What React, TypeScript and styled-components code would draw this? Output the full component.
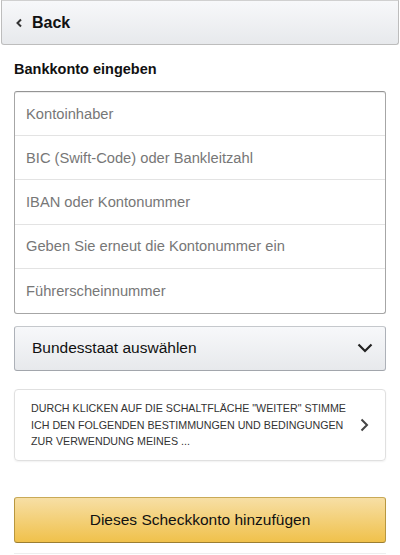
import React from "react";
import styled, { createGlobalStyle } from "styled-components";

const Global = createGlobalStyle`
  html, body { margin: 0; padding: 0; background: #fff; }
  body { font-family: "Liberation Sans", Arial, sans-serif; color: #111; }
  * { box-sizing: border-box; }
`;

const Page = styled.div`
  width: 400px;
  min-height: 555px;
  display: flex;
  flex-direction: column;
  & > * { flex-shrink: 0; }
`;

const Header = styled.div`
  height: 45px;
  margin: 0 1px;
  border: 1px solid #bdbdbd;
  border-top-color: #d0d0d0;
  border-radius: 0 0 3px 3px;
  background: linear-gradient(#f7f8fa, #e7e9ec);
  display: flex;
  align-items: center;
  padding-left: 13px;
  gap: 9px;
  font-size: 16px;
  font-weight: bold;
  color: #111;
`;

const Content = styled.div`
  padding: 0 14px;
  display: flex;
  flex-direction: column;
  & > * { flex-shrink: 0; }
`;

const Title = styled.h2`
  margin: 14px 0 12px;
  font-size: 14.5px;
  font-weight: bold;
  line-height: 20px;
`;

const FieldGroup = styled.div`
  border: 1px solid #a6a6a6;
  border-top-color: #949494;
  border-radius: 3px;
  box-shadow: 0 1px 0 rgba(0,0,0,.07) inset;
  display: flex;
  flex-direction: column;
`;

const Field = styled.div<{ $last?: boolean }>`
  height: 44.2px;
  display: flex;
  align-items: center;
  padding-left: 11px;
  font-size: 14.7px;
  color: #777;
  border-bottom: ${(p) => (p.$last ? "none" : "1px solid #e3e3e3")};
`;

const Select = styled.div`
  margin-top: 12px;
  height: 45px;
  border: 1px solid #adb1b8;
  border-top-color: #c5c8cc;
  border-bottom-color: #a2a6ac;
  border-radius: 3px;
  background: linear-gradient(#f7f8fa, #e7e9ec);
  display: flex;
  align-items: center;
  justify-content: space-between;
  padding: 0 12px 0 17px;
  font-size: 15.5px;
  color: #111;
`;

const Terms = styled.div`
  margin-top: 18px;
  height: 72px;
  border: 1px solid #e0e0e0;
  border-radius: 4px;
  box-shadow: 0 1px 2px rgba(0,0,0,.06);
  display: flex;
  align-items: center;
  justify-content: space-between;
  padding: 0 16px 0 16px;
`;

const TermsText = styled.div`
  font-size: 10.7px;
  line-height: 16.5px;
  color: #333;
  text-transform: uppercase;
  width: 325px;
`;

const Primary = styled.button`
  margin-top: 36px;
  height: 46px;
  border: 1px solid #b8973f;
  border-top-color: #c9aa57;
  border-bottom-color: #9c7e31;
  border-radius: 3px;
  background: linear-gradient(#f7dfa5, #f0c14b);
  font-family: "Liberation Sans", Arial, sans-serif;
  font-size: 15.5px;
  color: #111;
  display: flex;
  align-items: center;
  justify-content: center;
  padding: 0;
`;

const Footer = styled.div`
  margin-top: 10px;
  border-top: 1px solid #eee;
  height: 4px;
`;

const fields = [
  "Kontoinhaber",
  "BIC (Swift-Code) oder Bankleitzahl",
  "IBAN oder Kontonummer",
  "Geben Sie erneut die Kontonummer ein",
  "Führerscheinnummer",
];

export default function App() {
  return (
    <Page>
      <Global />
      <Header>
        <svg width="8" height="10" viewBox="0 0 8 10">
          <path d="M6 1.5 L2.5 5 L6 8.5" fill="none" stroke="#333" strokeWidth="2" />
        </svg>
        Back
      </Header>
      <Content>
        <Title>Bankkonto eingeben</Title>
        <FieldGroup>
          {fields.map((f, i) => (
            <Field key={f} $last={i === fields.length - 1}>
              {f}
            </Field>
          ))}
        </FieldGroup>
        <Select>
          Bundesstaat auswählen
          <svg width="16" height="10" viewBox="0 0 16 10">
            <path d="M1.5 1.5 L8 8 L14.5 1.5" fill="none" stroke="#222" strokeWidth="2.2" />
          </svg>
        </Select>
        <Terms>
          <TermsText>
            Durch Klicken auf die Schaltfläche "Weiter" stimme ich den folgenden
            Bestimmungen und Bedingungen zur Verwendung meines ...
          </TermsText>
          <svg width="9" height="14" viewBox="0 0 9 14">
            <path d="M1.5 1.5 L7 7 L1.5 12.5" fill="none" stroke="#444" strokeWidth="2" />
          </svg>
        </Terms>
        <Primary>Dieses Scheckkonto hinzufügen</Primary>
        <Footer />
      </Content>
    </Page>
  );
}
